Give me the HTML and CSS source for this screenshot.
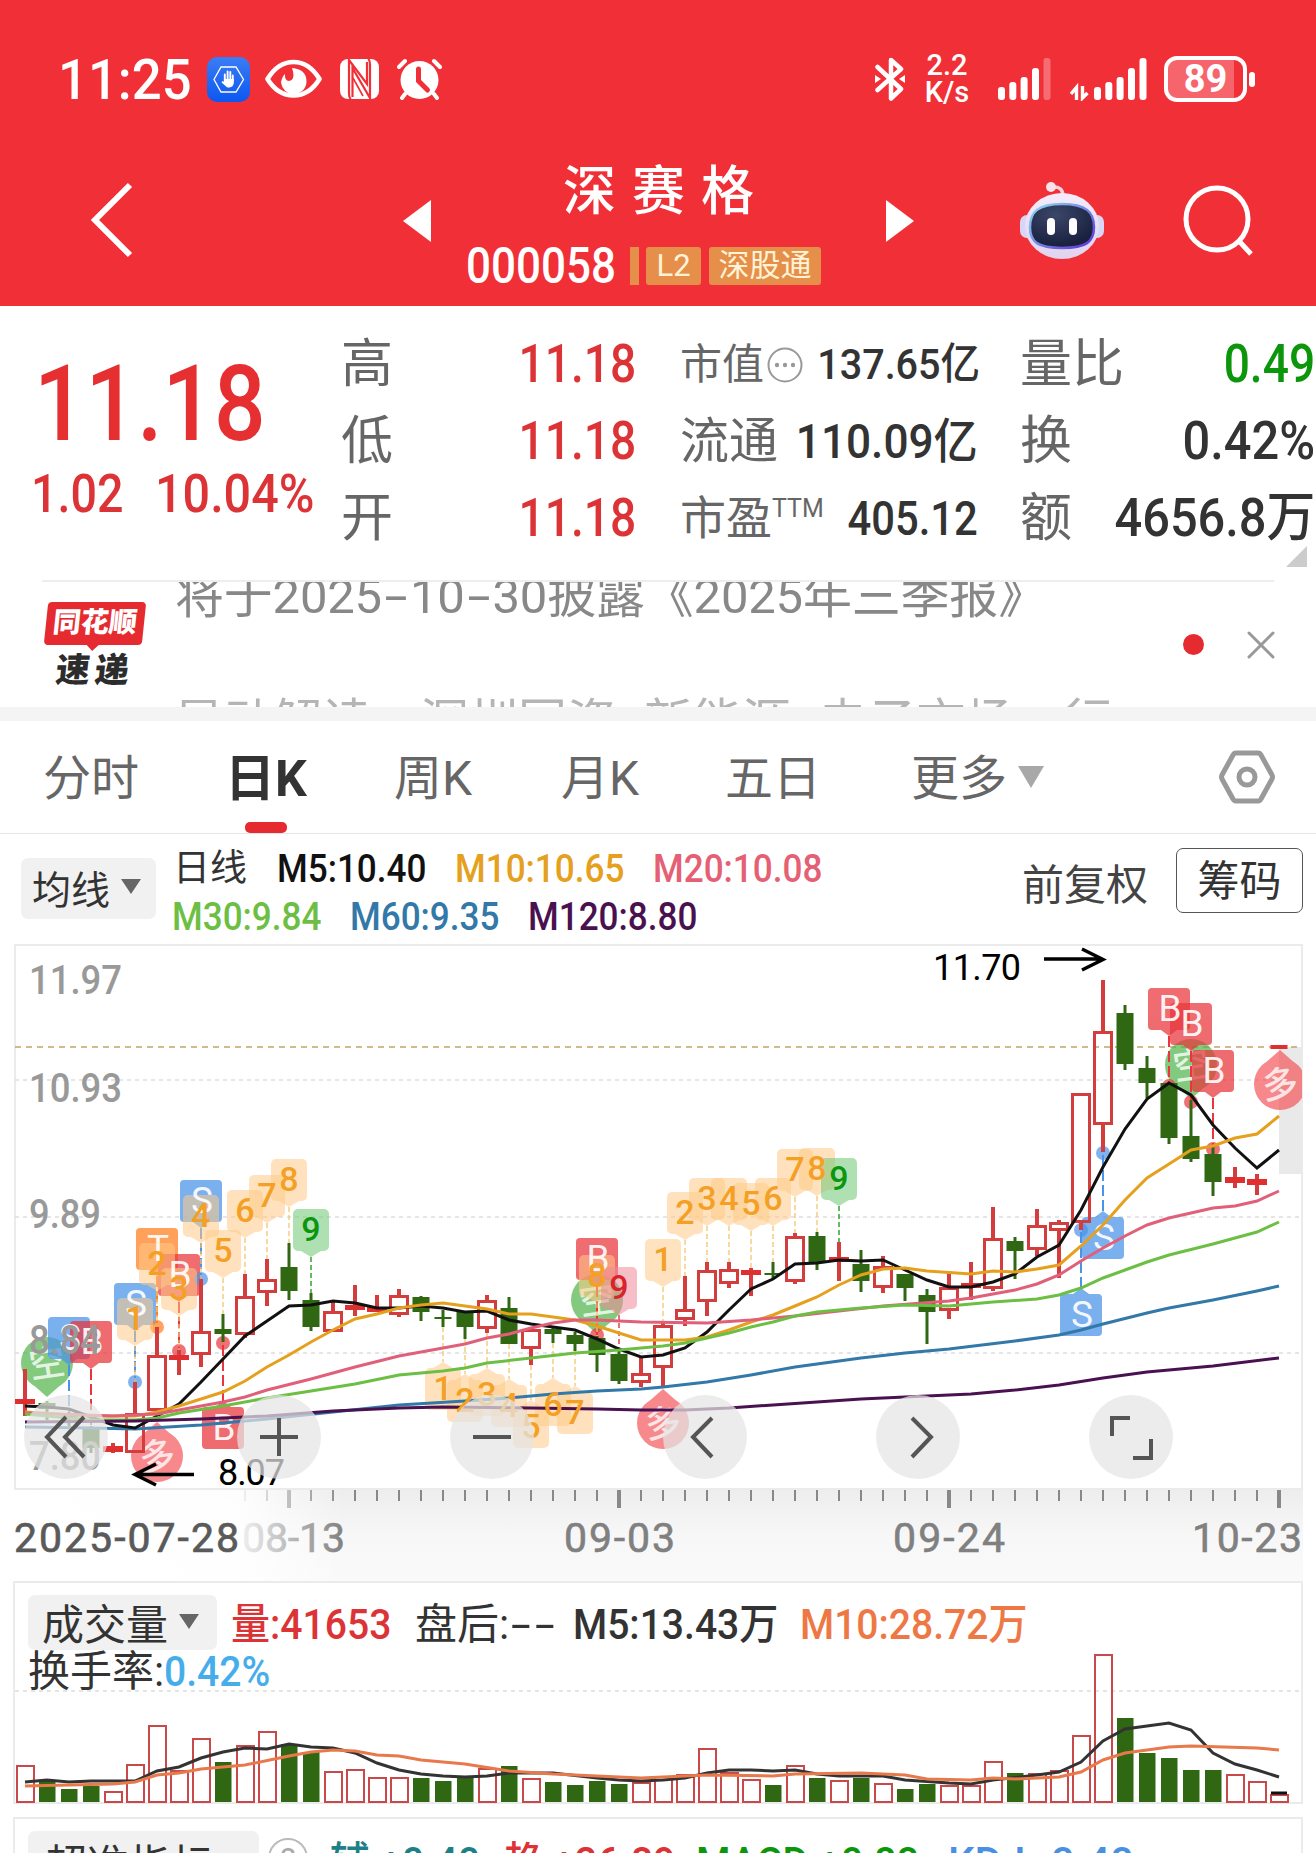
FILE: index.html
```
<!DOCTYPE html>
<html lang="zh-CN">
<head>
  <meta charset="UTF-8" />
  <meta name="viewport" content="width=device-width, initial-scale=1.0"/>
  <title>深赛格 000058</title>
  <link rel="stylesheet" href="styles.css">
</head>
<body>

  <!-- HEADER -->
  <header class="top">
    <div class="status-bar">
      <span class="time"><span class="sx">11:25</span></span>
      <svg class="ic-hand" width="43" height="45" viewBox="0 0 43 45">
        <defs><linearGradient id="blue" x1="0" y1="0" x2="0" y2="1"><stop offset="0" stop-color="#3b7df5"/><stop offset="1" stop-color="#0c57f0"/></linearGradient></defs>
        <rect width="43" height="45" rx="10" fill="url(#blue)"/>
        <path d="M14 10h15l7.500 12.500L29 35H14L7 22.500z" fill="none" stroke="#fff" stroke-width="1.300"/>
        <path d="M17.800 25v-7.500M20.600 23v-8.500M23.300 23v-8M25.800 24v-5.500" stroke="#fff" stroke-width="1.900" stroke-linecap="round"/>
        <path d="M16.800 22h10v4q-.5 4-4.500 4.500h-2l-5.800-5 1-1.500 2 1z" fill="#fff"/>
      </svg>
      <svg class="ic-eye" width="57" height="40" viewBox="0 0 57 40">
        <path d="M2.500 20C8 11 17 3 28.500 3S49 11 54.500 20C49 29 40 36.500 28.500 36.500S8 29 2.500 20z" fill="none" stroke="#fff" stroke-width="4.600" stroke-linejoin="round"/>
        <path d="M27 9q14 1 14.500 13 0 11-13 13.500-11-2-12.500-12 1-6 4-8.500-.5 7 4 7 7-1 3-13z" fill="#fff"/>
      </svg>
      <svg class="ic-nfc" width="39" height="40" viewBox="0 0 39 40">
        <rect width="39" height="40" rx="8" fill="#fff"/>
        <path d="M11 40q-2-1-2-6V1L27 25V3M28 0q2 1 2 6v33L12.500 9v29" fill="none" stroke="#f12f37" stroke-width="2.200"/>
        <path d="M13 19l10 18" stroke="#f12f37" stroke-width="1.600"/>
      </svg>
      <svg class="ic-alarm" width="45" height="43" viewBox="0 0 45 43">
        <circle cx="22.500" cy="22" r="19" fill="#fff"/>
        <path d="M2 9l6-6M43 9l-6-6M8 36l-3 4M37 36l3 4" stroke="#fff" stroke-width="4" stroke-linecap="round"/>
        <path d="M21.500 11v12l9 9" fill="none" stroke="#f12f37" stroke-width="5" stroke-linecap="round"/>
      </svg>

      <svg class="ic-bt" width="30" height="44" viewBox="0 0 30 44">
        <path d="M2.500 10L26 32 16 41.500V3L26 12 2.500 33" fill="none" stroke="#fff" stroke-width="4.500" stroke-linejoin="round" stroke-linecap="round"/>
        <path d="M0 18l6 4-6 4zM30 18l-6 4 6 4z" fill="#fff"/>
      </svg>
      <div class="net"><span>2.2</span><span>K/s</span></div>
      <svg class="ic-sig" width="54" height="43" viewBox="0 0 54 43">
        <g fill="#fff"><rect y="29" width="7" height="13" rx="3"/><rect x="11.300" y="24" width="7" height="18" rx="3"/><rect x="22.600" y="19" width="7" height="23" rx="3"/><rect x="34" y="10" width="7" height="32" rx="3"/><rect x="45.500" width="7" height="42" rx="3" opacity=".3"/></g>
      </svg>
      <svg class="ic-sig2" width="77" height="43" viewBox="0 0 77 43">
        <path d="M1 36l5.500-6.500V42M17.500 35L12.500 40V28" fill="none" stroke="#fff" stroke-width="3.400"/>
        <g fill="#fff"><rect x="24" y="29" width="7" height="13" rx="3"/><rect x="35.300" y="24" width="7" height="18" rx="3"/><rect x="46.600" y="19" width="7" height="23" rx="3"/><rect x="58" y="10" width="7" height="32" rx="3"/><rect x="69.500" width="7" height="42" rx="3"/></g>
      </svg>
      <div class="battery">89</div><i class="battery-nub"></i>
    </div>

    <nav class="nav">
      <svg width="44" height="78" viewBox="0 0 44 78"><path d="M40 3L5 38l35 35" fill="none" stroke="#fff" stroke-width="6"/></svg>
      <svg width="28" height="42" viewBox="0 0 28 42"><path d="M28 0v42L0 21z" fill="#fff"/></svg>
      <div class="stock">
        <h1>深赛格</h1>
        <div class="code"><span class="code-num"><span class="sx">000058</span></span><i></i><b>L2</b><b class="wide">深股通</b></div>
      </div>
      <svg width="28" height="42" viewBox="0 0 28 42"><path d="M0 0v42l28-21z" fill="#fff"/></svg>
      <svg class="robot" width="84" height="78" viewBox="0 0 84 78">
        <defs>
          <linearGradient id="shell" x1="0" y1="0" x2="0" y2="1"><stop offset="0" stop-color="#f5ecfa"/><stop offset=".6" stop-color="#e4ddf8"/><stop offset="1" stop-color="#e2d3ee"/></linearGradient>
          <linearGradient id="rim" x1="0" y1="0" x2="1" y2="1"><stop offset="0" stop-color="#8fdcf0"/><stop offset="1" stop-color="#5b2fd8"/></linearGradient>
          <radialGradient id="face" cx=".4" cy=".25" r=".7"><stop offset="0" stop-color="#3c4668"/><stop offset="1" stop-color="#19213f"/></radialGradient>
        </defs>
        <path d="M43 14q0-10-11-9" fill="none" stroke="#f3d3e0" stroke-width="3.500"/>
        <circle cx="31" cy="5" r="5" fill="#f9e3ea"/>
        <rect x="0" y="33" width="84" height="23" rx="7" fill="#d9d5f7"/>
        <ellipse cx="42" cy="44" rx="37" ry="33" fill="url(#shell)"/>
        <path d="M42 22C66 22 74 30 74 45S66 66 42 66 10 60 10 45 18 22 42 22z" fill="url(#face)" stroke="url(#rim)" stroke-width="2.500"/>
        <rect x="27" y="36" width="8" height="17" rx="4" fill="#fff"/><rect x="49" y="36" width="8" height="17" rx="4" fill="#fff"/>
      </svg>
      <svg class="search" width="72" height="72" viewBox="0 0 72 72"><circle cx="34" cy="34" r="31" fill="none" stroke="#fff" stroke-width="5"/><path d="M56 56l12 13" stroke="#fff" stroke-width="5"/></svg>
    </nav>
  </header>

  <!-- QUOTE -->
  <section class="quote">
    <div class="price-col">
      <div class="price"><span class="sx">11.18</span></div>
      <div class="change"><span class="sx">1.02</span><span class="sx pct">10.04%</span></div>
    </div>
    <dl class="q-col c1">
      <div><dt>高</dt><dd class="red">11.18</dd></div>
      <div><dt>低</dt><dd class="red">11.18</dd></div>
      <div><dt>开</dt><dd class="red">11.18</dd></div>
    </dl>
    <dl class="q-col c2">
      <div class="small"><dt>市值<svg width="36" height="36" viewBox="0 0 36 36"><circle cx="18" cy="18" r="16.500" fill="none" stroke="#999" stroke-width="2"/><g fill="#999"><circle cx="10" cy="18" r="2.200"/><circle cx="18" cy="18" r="2.200"/><circle cx="26" cy="18" r="2.200"/></g></svg></dt><dd class="cn">137.65亿</dd></div>
      <div><dt>流通</dt><dd class="cn">110.09亿</dd></div>
      <div class="mid"><dt>市盈<sup>TTM</sup></dt><dd>405.12</dd></div>
    </dl>
    <dl class="q-col c3">
      <div><dt>量比</dt><dd class="green">0.49</dd></div>
      <div><dt>换</dt><dd class="cn">0.42%</dd></div>
      <div><dt>额</dt><dd class="cn">4656.8万</dd></div>
    </dl>
    <i class="corner"></i>
  </section>

  <!-- NEWS TICKER -->
  <section class="news">
    <div class="news-logo"><span class="lg-top"><em>同花顺</em></span><span class="lg-bot">速递</span></div>
    <div class="ticker">
      <p>将于2025<s>-</s>10<s>-</s>30披露《2025年三季报》</p>
      <p class="next">异动解读：深圳国资+新能源+电子市场一行</p>
    </div>
    <i class="dot"></i>
    <svg width="28" height="28" viewBox="0 0 28 28"><path d="M2 2l24 24M26 2L2 26" stroke="#999" stroke-width="3" stroke-linecap="round"/></svg>
  </section>

  <!-- PERIOD TABS -->
  <div class="tabs">
    <a>分时</a>
    <a class="active">日K</a>
    <a>周K</a>
    <a>月K</a>
    <a>五日</a>
    <a>更多<svg width="26" height="22" viewBox="0 0 26 22"><path d="M0 0h26L13 22z" fill="#a8a8a8"/></svg></a>
    <svg class="gear" width="58" height="56" viewBox="0 0 58 56"><path d="M18 4h22q2 0 3 2l11 20q1 2 0 4L43 50q-1 2-3 2H18q-2 0-3-2L4 30q-1-2 0-4L15 6q1-2 3-2z" fill="none" stroke="#999" stroke-width="5"/><circle cx="29" cy="28" r="8" fill="none" stroke="#999" stroke-width="5"/></svg>
  </div>

  <!-- MA LEGEND -->
  <div class="legend">
    <button class="drop">均线<i></i></button>
    <div class="ma">
      <div class="ma-1"><span class="ma-t">日线</span><span class="sx m5">M5:10.40</span><span class="sx m10">M10:10.65</span><span class="sx m20">M20:10.08</span></div>
      <div class="ma-2"><span class="sx m30">M30:9.84</span><span class="sx m60">M60:9.35</span><span class="sx m120">M120:8.80</span></div>
    </div>
    <span class="fq">前复权</span>
    <button class="chips">筹码</button>
  </div>

  <!-- K LINE -->
  <div class="kline">
    <svg id="kchart" width="1316" height="637" viewBox="0 944 1316 637"></svg>
    <div class="tools">
      <button><svg viewBox="0 0 84 84"><path d="M42 22L23 42l19 20M60 22L41 42l19 20"/></svg></button>
      <button><svg viewBox="0 0 84 84"><path d="M42 23v38M23 42h38"/></svg></button>
      <button><svg viewBox="0 0 84 84"><path d="M23 42h38"/></svg></button>
      <button><svg viewBox="0 0 84 84"><path d="M49 23L30 42l19 20"/></svg></button>
      <button><svg viewBox="0 0 84 84"><path d="M36 23l19 19-19 20"/></svg></button>
      <button><svg viewBox="0 0 84 84"><path d="M23 41V23h18M44 63h18V44"/></svg></button>
    </div>
  </div>

  <!-- VOLUME -->
  <section class="volume">
    <div class="v-row">
      <button class="drop">成交量<i></i></button>
      <span class="v1"><span class="sx">量:41653</span></span><span class="v2">盘后:<s>-</s><s>-</s></span><span class="v3"><span class="sx">M5:13.43万</span></span><span class="v4 sx">M10:28.72万</span>
    </div>
    <div class="v-row2">换手率:<span class="sx">0.42%</span></div>
    <svg id="vchart" width="1316" height="164" viewBox="0 1640 1316 164"></svg>
  </section>

  <!-- INDICATOR -->
  <section class="indicator">
    <button class="drop">超准指标<i></i></button>
    <span class="help">?</span>
    <span class="i1"><span class="sx">辅:+0.40</span></span><span class="i2"><span class="sx">趋:+26.89</span></span><span class="i3"><span class="sx">MACD:+0.88</span></span><span class="i4">KDJ:-0.40</span>
  </section>

  <script src="chart.js"></script>
</body>
</html>
```
FILE: styles.css
```
* {
  box-sizing: border-box;
  margin: 0;
  padding: 0;
}

body {
  width: 1316px;
  height: 1853px;
  overflow: hidden;
  background: #fff;
  color: #333;
  font-family: Roboto, "Noto Sans CJK SC", sans-serif;
}

svg {
  display: block;
  flex: none;
}

i, em {
  font-style: normal;
}

button {
  border: none;
  font-family: inherit;
  color: #333;
}

/* narrow digits */
.sx {
  display: inline-block;
  transform: scaleX(0.88);
  transform-origin: left center;
}

/* wide hyphen */
s {
  display: inline-block;
  width: 0.57em;
  text-align: center;
  text-decoration: none;
  transform: scaleX(1.7);
}

/* ===== HEADER ===== */
.top {
  height: 306px;
  background: #f12f37;
  color: #fff;
}

.status-bar {
  height: 158px;
  display: flex;
  align-items: center;
  padding-left: 58px;
}

.time {
  width: 149px;
  font-size: 56px;
  font-weight: 500;
  line-height: 68px;
  padding-top: 2px;
  white-space: nowrap;
}

.time .sx { transform: scaleX(0.94); }

.ic-eye { margin-left: 15px; }
.ic-nfc { margin-left: 18px; }
.ic-alarm { margin-left: 18px; }
.ic-bt { margin-left: 433px; }

.net {
  width: 46px;
  margin-left: 19px;
  display: flex;
  flex-direction: column;
  align-items: center;
  font-size: 29px;
  font-weight: 500;
  line-height: 27px;
}

.ic-sig { margin-left: 28px; }
.ic-sig2 { margin-left: 18px; }

.battery {
  width: 83px;
  height: 46px;
  margin-left: 17px;
  border: 4px solid #fff;
  border-radius: 13px;
  background: linear-gradient(to right, #f7656c 88%, transparent 88%);
  font-size: 38px;
  font-weight: 700;
  line-height: 39px;
  text-align: center;
}

.battery-nub {
  width: 6px;
  height: 15px;
  margin-left: 2px;
  border-radius: 3px;
  background: #fff;
}

.nav {
  display: grid;
  grid-template-columns: 313px 28px 455px 134px 163px 80px;
  grid-template-rows: 126px;
  align-items: center;
  padding-left: 90px;
}

.stock {
  padding-top: 14px;
}

.stock h1 {
  padding: 1px 0 0 132px;
  font-size: 53px;
  font-weight: 500;
  line-height: 75px;
  letter-spacing: 16px;
  white-space: nowrap;
}

.code {
  height: 73px;
  display: flex;
  align-items: center;
  padding-left: 35px;
}

.code-num {
  width: 164px;
  font-size: 50px;
  font-weight: 500;
}

.code i {
  width: 9px;
  height: 38px;
  margin-right: 7px;
  background: #e58f4a;
}

.code b {
  width: 55px;
  height: 38px;
  margin-right: 8px;
  border-radius: 3px;
  background: #e58f4a;
  color: #fff3d6;
  font-size: 31px;
  font-weight: 400;
  line-height: 37px;
  text-align: center;
  white-space: nowrap;
}

.code .wide {
  width: 112px;
}

/* ===== QUOTE ===== */
.quote {
  position: relative;
  height: 276px;
  display: flex;
  padding-top: 20px;
}

.quote::after {
  content: "";
  position: absolute;
  left: 42px;
  right: 42px;
  bottom: 0;
  border-bottom: 2px solid #eee;
}

.price-col {
  width: 341px;
  color: #e52f31;
  font-weight: 500;
}

.price {
  padding: 27px 0 0 34px;
  font-size: 105px;
  line-height: 104px;
}

.price .sx { transform: scaleX(0.865); }

.change {
  display: grid;
  grid-template-columns: 124px auto;
  padding-left: 31px;
  font-size: 53px;
  line-height: 74px;
  color: #dc3336;
}

.change .pct { transform: scaleX(0.915); }

.q-col > div {
  height: 77px;
  display: flex;
  align-items: center;
  justify-content: space-between;
  white-space: nowrap;
  font-size: 52px;
  line-height: 77px;
}

.c1 { width: 295px; }
.c2 { width: 298px; margin-left: 44px; }
.c3 { width: 295px; margin-left: 42px; }

.q-col dt {
  display: flex;
  align-items: center;
  color: #666;
}

.q-col dd {
  font-size: 53px;
  font-weight: 500;
  transform: scaleX(0.87);
  transform-origin: right center;
}

.q-col .cn {
  transform: scaleX(0.92);
}

.c2 dt { font-size: 49px; }
.c2 dd { font-size: 48px; }
.c2 .small dt { font-size: 42px; gap: 3px; }
.c2 .small dd { font-size: 43px; }
.c2 .mid dt { font-size: 46px; }

.c2 sup {
  font-size: 25px;
  line-height: 30px;
  margin-top: -20px;
}

.red { color: #dc3336; }
.green { color: #0c960c; }

.corner {
  position: absolute;
  right: 9px;
  bottom: 15px;
  border-left: 21px solid transparent;
  border-bottom: 21px solid #ccc;
}

/* ===== NEWS ===== */
.news {
  height: 139px;
  border-bottom: 14px solid #f4f4f4;
  display: flex;
  align-items: center;
  padding-left: 43px;
  overflow: hidden;
}

.news-logo {
  width: 132px;
  display: flex;
  flex-direction: column;
  font-weight: 900;
}

.lg-top {
  position: relative;
  width: 98px;
  height: 43px;
  margin: 2px 0 0 3px;
  border-radius: 4px;
  background: #e52b30;
  color: #fff;
  font-size: 28px;
  line-height: 41px;
  text-align: center;
  transform: skewX(-6deg);
}

.lg-top::after {
  content: "";
  position: absolute;
  left: 43px;
  top: 43px;
  border: 6px solid transparent;
  border-top-color: #e52b30;
}

.lg-bot {
  padding-left: 13px;
  margin-top: 5px;
  color: #2c2c2c;
  font-size: 34px;
  line-height: 40px;
  letter-spacing: 5px;
  transform: skewX(-6deg);
}

.ticker {
  width: 1008px;
  align-self: flex-start;
  height: 125px;
  overflow: hidden;
}

.ticker p {
  font-size: 49px;
  line-height: 126px;
  color: #888;
  white-space: nowrap;
}

.ticker p:first-child { margin-top: -48px; letter-spacing: -0.2px; }
.ticker .next { color: #b5b5b5; }

.dot {
  width: 21px;
  height: 21px;
  margin-right: 43px;
  border-radius: 50%;
  background: #e52b30;
}

/* ===== TABS ===== */
.tabs {
  height: 113px;
  display: flex;
  align-items: center;
  padding-left: 43px;
  border-bottom: 1px solid #e6e6e6;
}

.tabs a {
  position: relative;
  width: 186px;
  display: flex;
  align-items: center;
  gap: 11px;
  padding-top: 4px;
  font-size: 48px;
  line-height: 108px;
  color: #666;
  white-space: nowrap;
}

.tabs a:nth-child(2) { width: 165px; }
.tabs a:nth-child(3) { width: 167px; }
.tabs a:nth-child(4) { width: 164px; }
.tabs a:nth-child(6) { width: 307px; }

.tabs a svg { margin-top: -4px; }

.tabs .active {
  color: #333;
  font-size: 50px;
  font-weight: 700;
  text-indent: -4px;
}

.tabs .active::after {
  content: "";
  position: absolute;
  left: 16px;
  bottom: 0;
  width: 42px;
  height: 11px;
  border-radius: 5px;
  background: #e52b30;
}

/* ===== LEGEND ===== */
.legend {
  height: 110px;
  display: flex;
  align-items: flex-start;
  padding-left: 21px;
}

.drop {
  flex: none;
  height: 61px;
  display: flex;
  align-items: center;
  border-radius: 7px;
  background: #f1f1f1;
  white-space: nowrap;
}

.drop i {
  border: 10px solid transparent;
  border-top: 15px solid #666;
  border-bottom: 0;
}

.legend .drop {
  width: 135px;
  margin-top: 24px;
  padding: 0 0 4px 11px;
  gap: 11px;
  font-size: 39px;
}

.ma {
  flex: none;
  width: 866px;
  padding: 11px 0 0 17px;
  font-size: 39px;
  font-weight: 500;
  line-height: 48px;
  white-space: nowrap;
}

.ma div {
  display: grid;
}

.ma .ma-1 { grid-template-columns: 104px 178px 198px 200px; }
.ma .ma-2 { grid-template-columns: 178px 178px 200px; margin-left: -1px; }

.ma .sx { transform: scaleX(0.9); }

.m5 { color: #111; }
.m10 { color: #e5a01e; }
.m20 { color: #e55f75; }
.m30 { color: #6cbf44; }
.m60 { color: #3278a8; }
.m120 { color: #4a1150; }

.ma .ma-t {
  font-size: 37px;
  font-weight: 400;
}

.fq {
  flex: none;
  width: 154px;
  font-size: 42px;
  line-height: 104px;
  color: #444;
}

.chips {
  flex: none;
  width: 127px;
  height: 65px;
  margin-top: 14px;
  padding-top: 3px;
  border: 1px solid #555;
  border-radius: 7px;
  background: #fff;
  font-size: 42px;
  line-height: 60px;
}

/* ===== K LINE ===== */
.kline {
  position: relative;
  height: 637px;
}

.tools {
  position: absolute;
  top: 451px;
  left: 24px;
  display: flex;
  gap: 129px;
}

.tools button {
  width: 84px;
  height: 84px;
  border-radius: 50%;
  background: rgba(229, 229, 229, 0.72);
}

.tools path {
  fill: none;
  stroke: #555;
  stroke-width: 4;
}

svg text {
  font-family: Roboto, "Noto Sans CJK SC", sans-serif;
}

/* ===== VOLUME ===== */
.volume {
  height: 223px;
  margin: 0 13px 0 13px;
  border: 2px solid #ebebeb;
  position: relative;
}

.v-row {
  height: 67px;
  display: flex;
  align-items: flex-start;
  padding: 12px 0 0 13px;
  font-size: 42px;
  font-weight: 500;
  line-height: 59px;
  white-space: nowrap;
}

.v-row .drop {
  width: 189px;
  height: 55px;
  padding: 0 0 2px 14px;
  gap: 11px;
  font-size: 42px;
}

.v-row .sx { transform: scaleX(0.93); }
.v-row .v1 { width: 184px; margin-left: 14px; color: #dc3336; }
.v-row .v2 { width: 158px; font-weight: 400; }
.v-row .v3 { width: 227px; }
.v-row .v4 { color: #ee7845; }

.v-row2 {
  padding-left: 13px;
  font-size: 42px;
  font-weight: 400;
  line-height: 43px;
}

.v-row2 span {
  color: #45aeea;
  font-weight: 500;
}

.v-row2 .sx { transform: scaleX(0.93); }

#vchart {
  position: absolute;
  left: -15px;
  bottom: -1px;
}

/* ===== INDICATOR ===== */
.indicator {
  height: 80px;
  margin: 13px 13px 0;
  border: 2px solid #ebebeb;
  display: flex;
  align-items: flex-start;
  padding: 12px 0 0 13px;
  font-size: 42px;
  font-weight: 500;
  line-height: 64px;
  white-space: nowrap;
}

.indicator .drop {
  width: 231px;
  padding-left: 17px;
  gap: 14px;
  font-size: 42px;
}

.help {
  width: 40px;
  height: 40px;
  margin: 7px 22px 0 9px;
  border: 2px solid #bbb;
  border-radius: 50%;
  color: #aaa;
  font-size: 32px;
  font-weight: 400;
  line-height: 38px;
  text-align: center;
}

.indicator > span { flex: none; }
.indicator .sx { transform: scaleX(0.94); }
.i1 { width: 173px; color: #1c8086; }
.i2 { width: 193px; color: #dc3336; }
.i3 { width: 252px; color: #0c960c; }
.i4 { color: #4a90e2; }
```
FILE: chart.js
```
const RED = '#d43d3d', GREEN = '#2f6713';
const X = i => 25 + 22 * i;

// [type, high, bodyTop, bodyBottom, low]  r = hollow red, f = solid red, g = green
const candles = [
  ['f',1369,1399,1404,1416], ['g',1401,1403,1409,1420], ['g',1412,1413,1418,1426], ['g',1426,1428,1448,1453],
  ['f',1443,1446,1452,1453], ['r',1382,1413,1453,1453], ['r',1327,1355,1411,1411], ['f',1350,1355,1360,1375],
  ['r',1279,1331,1355,1367], ['g',1314,1329,1334,1342], ['r',1274,1296,1335,1338], ['r',1259,1279,1293,1306],
  ['g',1243,1267,1291,1300], ['g',1293,1300,1327,1331], ['r',1302,1311,1332,1332], ['f',1285,1305,1310,1316],
  ['f',1295,1307,1312,1312], ['r',1289,1295,1315,1317], ['g',1296,1297,1312,1321], ['g',1310,1317,1319,1327],
  ['g',1312,1312,1327,1339], ['r',1295,1300,1329,1333], ['g',1297,1308,1344,1344], ['r',1329,1329,1349,1365],
  ['g',1327,1329,1334,1343], ['g',1332,1335,1344,1351], ['g',1336,1338,1355,1372], ['g',1350,1354,1381,1384],
  ['r',1357,1373,1383,1387], ['r',1323,1325,1368,1386], ['r',1276,1309,1320,1326], ['r',1262,1270,1302,1316],
  ['r',1262,1269,1284,1288], ['f',1268,1270,1275,1296], ['g',1262,1273,1275,1278], ['r',1233,1236,1282,1284],
  ['g',1232,1236,1262,1270], ['f',1242,1257,1262,1281], ['g',1250,1264,1281,1292], ['r',1256,1266,1288,1293],
  ['g',1274,1274,1288,1301], ['g',1289,1295,1312,1344], ['r',1272,1287,1311,1319], ['f',1262,1283,1288,1300],
  ['r',1207,1238,1289,1291], ['g',1237,1241,1251,1279], ['r',1209,1225,1250,1256], ['r',1220,1222,1231,1278],
  ['r',1093,1093,1223,1230], ['r',980,1031,1125,1152], ['g',1005,1013,1064,1070], ['g',1056,1068,1083,1098],
  ['g',1082,1083,1138,1144], ['g',1100,1136,1159,1162], ['g',1147,1154,1182,1196], ['f',1167,1177,1183,1188],
  ['f',1174,1179,1185,1195], ['f',1045,1045,1049,1049]
];

const lines = {
  '#3278a8': '25,1427 91,1428 135,1429 201,1425 267,1419 333,1412 399,1405 465,1401 509,1398 553,1394 597,1391 641,1389 663,1387 707,1382 751,1375 795,1367 839,1361 861,1358 905,1353 949,1349 1015,1341 1059,1335 1081,1330 1103,1324 1147,1313 1169,1308 1213,1300 1257,1291 1279,1286',
  '#111': '25,1406 47,1407 69,1409 91,1417 113,1425 135,1428 157,1416 179,1404 201,1382 223,1359 245,1336 267,1321 289,1306 311,1305 333,1301 355,1303 377,1308 399,1308 421,1306 443,1308 465,1312 487,1311 509,1320 531,1324 553,1327 575,1330 597,1339 619,1349 641,1357 663,1355 685,1348 707,1332 729,1310 751,1289 773,1279 795,1264 817,1263 839,1260 861,1261 883,1260 905,1270 927,1280 949,1287 971,1287 993,1282 1015,1274 1037,1257 1059,1245 1081,1210 1103,1167 1125,1129 1147,1099 1169,1083 1191,1095 1213,1125 1235,1148 1257,1168 1279,1150',
  '#e5a01e': '25,1412 91,1416 135,1416 157,1412 179,1406 223,1392 245,1381 267,1367 289,1355 311,1342 333,1330 355,1319 377,1314 399,1308 421,1305 443,1303 465,1306 487,1309 509,1314 531,1314 553,1317 575,1320 597,1326 619,1333 641,1340 663,1340 685,1340 707,1337 729,1330 751,1322 773,1315 795,1306 817,1297 839,1285 861,1275 883,1269 905,1268 927,1271 971,1274 993,1271 1015,1272 1037,1269 1059,1265 1081,1246 1103,1225 1125,1200 1147,1178 1169,1164 1191,1150 1213,1146 1235,1138 1257,1134 1279,1116',
  '#e0607a': '25,1413 113,1416 157,1414 201,1406 223,1402 245,1397 267,1390 311,1379 355,1367 399,1356 443,1348 465,1344 487,1338 509,1334 531,1328 553,1323 575,1320 597,1320 641,1322 707,1323 751,1320 795,1316 839,1311 883,1306 949,1301 971,1298 993,1294 1015,1290 1037,1284 1059,1275 1081,1261 1103,1248 1125,1236 1147,1225 1169,1218 1191,1213 1213,1208 1235,1206 1257,1201 1279,1191',
  '#6cbf44': '25,1414 91,1420 135,1420 157,1418 179,1413 223,1406 267,1398 311,1391 355,1384 399,1375 443,1371 465,1368 487,1363 531,1358 575,1353 619,1350 663,1346 685,1343 707,1338 729,1333 751,1327 773,1322 795,1316 817,1312 839,1310 861,1308 905,1305 949,1306 993,1302 1037,1299 1059,1295 1081,1288 1103,1278 1125,1270 1147,1262 1169,1255 1213,1244 1257,1232 1279,1222',
  '#4a1150': '25,1422 135,1421 201,1419 267,1416 333,1411 399,1408 443,1407 531,1408 597,1409 641,1410 685,1410 729,1408 773,1405 817,1402 861,1399 927,1396 971,1394 1015,1390 1059,1385 1103,1378 1147,1372 1213,1366 1279,1358'
};

// nine-turn counters: [index, digit, top, color, dir]
const counters = [
  [5,1,1298,'o'], [6,2,1243,'o'], [7,3,1268,'o'], [8,4,1195,'o'], [9,5,1230,'o'], [10,6,1190,'o'],
  [11,7,1175,'o'], [12,8,1159,'o'], [13,9,1209,'g'],
  [26,8,1255,'o'], [27,9,1267,'r'],
  [29,1,1239,'o'], [30,2,1192,'o'], [31,3,1178,'o'], [32,4,1178,'o'], [33,5,1183,'o'], [34,6,1178,'o'],
  [35,7,1149,'o'], [36,8,1148,'o'], [37,9,1158,'g'],
  [19,1,1368,'o','u'], [20,2,1380,'o','u'], [21,3,1374,'o','u'], [22,4,1385,'o','u'],
  [23,5,1406,'o','u'], [24,6,1384,'o','u'], [25,7,1392,'o','u']
];
const counterColors = { o: ['#ffcb88', '#f3a024'], g: ['#6fc873', '#0c960c'], r: ['#f08a98', '#d8242c'] };

// trade marks: [index, letter, top, dotY, dir]
const marks = [
  [2,'S',1317,1420], [3,'B',1321,1425], [5,'S',1283,1382], [6,'T',1228,1327], [7,'B',1254,1351], [8,'S',1180,1279],
  [9,'B',1407,1343,'u'], [26,'B',1238,1335], [52,'B',988,1086], [53,'B',1003,1102], [54,'B',1050,1149],
  [49,'S',1217,1153,'u'], [48,'S',1294,1230,'u']
];
const markColors = { S: '#4b93ea', B: '#e9353b', T: '#ff7f1e' };

// bull / bear bubbles: [cx, cy, char, color, dir]
const bubbles = [
  [47,1363,'空','#4fb548','d'], [597,1300,'空','#4fb548','d'], [1191,1065,'空','#4fb548','d'],
  [157,1456,'多','#f4575c','u'], [663,1423,'多','#f4575c','u'], [1280,1084,'多','#f4575c','u']
];

function candle(c, i) {
  const [t, hi, top, bot, lo] = c;
  const x = X(i), col = t === 'g' ? GREEN : RED;
  const w = t === 'g' ? 17 : (i === 57 ? 17 : 20);
  let s = '';
  if (t === 'r') {
    s += `<path d="M${x} ${hi}V${top}M${x} ${bot}V${lo}" stroke="${col}" stroke-width="4"/>`;
    s += `<rect x="${x - 8.5}" y="${top + 1.5}" width="17" height="${bot - top - 3}" fill="none" stroke="${col}" stroke-width="3"/>`;
  } else {
    s += `<path d="M${x} ${hi}V${lo}" stroke="${col}" stroke-width="${t === 'g' ? 3 : 4}"/>`;
    s += `<rect x="${x - w / 2}" y="${top}" width="${w}" height="${bot - top}" fill="${t === 'f' ? '#e02f30' : col}"/>`;
  }
  return s;
}

function counter([i, n, top, c, dir]) {
  const x = X(i), [bg, fg] = counterColors[c];
  const tail = dir ? `M${x - 10} ${top}L${x} ${top - 6}L${x + 10} ${top}z` : `M${x - 10} ${top + 42}L${x} ${top + 48}L${x + 10} ${top + 42}z`;
  const stem = dir ? `M${x} ${candles[i][4]}V${top - 6}` : `M${x} ${top + 48}V${candles[i][1]}`;
  return `<path d="${stem}" stroke="${c === 'o' ? '#f5c56c' : fg}" stroke-width="1.6" stroke-dasharray="5 3" opacity=".8"/>
    <g fill="${bg}" opacity=".55"><rect x="${x - 18}" y="${top}" width="36" height="42" rx="5"/><path d="${tail}"/></g>`;
}

function counterText([i, n, top, c]) {
  return `<text x="${X(i)}" y="${top + 32}" font-size="34" font-weight="500" fill="${counterColors[c][1]}" text-anchor="middle">${n}</text>`;
}

function mark([i, ch, top, dot, dir]) {
  const x = X(i), col = markColors[ch];
  const tail = dir ? `M${x - 8} ${top}L${x} ${top - 6}L${x + 8} ${top}z` : `M${x - 8} ${top + 42}L${x} ${top + 48}L${x + 8} ${top + 42}z`;
  return `<path d="M${x} ${dir ? top - 6 : top + 48}V${dot}" stroke="${col}" stroke-width="2" stroke-dasharray="11 4"/>
    ${i > 3 ? `<circle cx="${x}" cy="${dot}" r="7" fill="${col}" opacity=".7"/>` : ''}
    <g fill="${col}" opacity=".73"><rect x="${x - 21}" y="${top}" width="42" height="42" rx="4"/><path d="${tail}"/></g>`;
}

function markText([i, ch, top]) {
  return `<text x="${X(i) + 1}" y="${top + 33}" font-size="37" fill="#fff" fill-opacity=".92" text-anchor="middle">${ch}</text>`;
}

function bubble([x, y, ch, col, dir]) {
  const tip = dir === 'd' ? `M${x - 17} ${y + 19}L${x} ${y + 34}L${x + 17} ${y + 19}z` : `M${x - 17} ${y - 19}L${x} ${y - 34}L${x + 17} ${y - 19}z`;
  return `<g fill="${col}" opacity=".7"><circle cx="${x}" cy="${y}" r="26"/><path d="${tip}"/></g>
    <text x="${x}" y="${y + 13}" font-size="36" font-weight="500" fill="#fff" fill-opacity=".8" text-anchor="middle" transform="rotate(-8 ${x} ${y})">${ch}</text>`;
}

let k = `<defs>
  <linearGradient id="axis" x1="0" y1="0" x2="0" y2="1"><stop offset="0" stop-color="#ededed"/><stop offset=".5" stop-color="#f7f7f7"/><stop offset="1" stop-color="#fafafa"/></linearGradient>
  <linearGradient id="fade" x1="0" y1="0" x2="1" y2="0"><stop offset="0" stop-color="#fff"/><stop offset=".68" stop-color="#fff" stop-opacity=".9"/><stop offset="1" stop-color="#fff" stop-opacity="0"/></linearGradient>
  <clipPath id="clip"><rect x="14" y="944" width="1288" height="546"/></clipPath></defs>`;
k += '<rect x="15" y="1489" width="1288" height="92" fill="url(#axis)"/>';

// axis ticks
for (let x = 245; x <= 1279; x += 22) {
  const major = (x - 289) % 330 === 0;
  k += `<path d="M${x} 1490v${major ? 18 : 11}" stroke="#888" stroke-width="${major ? 4 : 2}"/>`;
}
const date = (x, t, w) => `<text x="${x}" y="1552" font-size="41" fill="#808080" stroke="#808080" stroke-width=".6" textLength="${w}">${t}</text>`;
k += date(242, '08-13', 103) + date(564, '09-03', 111) + date(893, '09-24', 112) + date(1192, '10-23', 110);
k += '<rect x="14" y="1489" width="330" height="92" fill="url(#fade)"/>';
k += '<text x="14" y="1552" font-size="41" fill="#5a5a5a" stroke="#5a5a5a" stroke-width=".7" textLength="225">2025-07-28</text>';

// frame and grid
k += '<rect x="15" y="945" width="1287" height="544" fill="#fff" stroke="#ebebeb" stroke-width="2"/>';
[1080, 1217, 1353].forEach(y => {
  k += `<path d="M15 ${y}H1302" stroke="#ddd" stroke-width="1.5" stroke-dasharray="4 4"/>`;
});
k += '<g clip-path="url(#clip)"><rect x="1279" y="1047" width="23" height="127" fill="#e9e9e9"/>';
k += '<path d="M15 1047H1302" stroke="#c4a468" stroke-width="1.6" stroke-dasharray="6 5"/>';

k += bubbles.map(bubble).join('') + marks.map(mark).join('') + candles.map(candle).join('');
k += counters.map(counter).join('') + marks.map(markText).join('');
for (const c in lines) k += `<polyline points="${lines[c]}" fill="none" stroke="${c}" stroke-width="3"/>`;
k += counters.map(counterText).join('') + '</g>';

[[994, '11.97', 93], [1102, '10.93', 93], [1228, '9.89', 72], [1354, '8.84', 72], [1470, '7.80', 72]].forEach(([y, t, w]) => {
  k += `<text x="29" y="${y}" font-size="40" font-weight="500" fill="#999" textLength="${w}" lengthAdjust="spacingAndGlyphs">${t}</text>`;
});
k += `<g fill="none" stroke="#000" stroke-width="3.5"><path d="M1044 959H1102M1082 949L1103 959.500L1082 970M194 1474.500H136M156 1464L135 1474.500L156 1485"/></g>
  <text x="933" y="980" font-size="36" textLength="88">11.70</text><text x="218" y="1485" font-size="36" textLength="67">8.07</text>`;
document.getElementById('kchart').innerHTML = k;

// volume bar tops
const vol = [1766,1781,1790,1787,1792,1765,1726,1771,1739,1763,1746,1732,1745,1753,1772,1770,1778,1778,1779,1782,
  1779,1769,1767,1779,1783,1786,1782,1785,1783,1777,1775,1749,1773,1780,1786,1766,1779,1781,1779,1784,
  1790,1785,1786,1786,1762,1774,1774,1771,1736,1655,1719,1754,1759,1771,1771,1775,1782,1795];

let v = '<path d="M15 1692H1302" stroke="#ddd" stroke-width="1.500" stroke-dasharray="4 4"/>';
vol.forEach((y, i) => {
  const x = X(i);
  if (candles[i][0] === 'g') v += `<rect x="${x - 8}" y="${y}" width="16.500" height="${1803 - y}" fill="${GREEN}"/>`;
  else v += `<rect x="${x - 8}" y="${y + 1}" width="17" height="${1802 - y}" fill="none" stroke="#c9484a" stroke-width="2"/>`;
});
v += '<path d="M1271 1794H1287" stroke="#111" stroke-width="3"/>';
v += '<polyline fill="none" stroke="#333" stroke-width="3" points="25,1783 47,1781 69,1783 91,1782 135,1782 157,1772 179,1768 201,1759 223,1753 245,1749 267,1750 289,1745 311,1748 333,1749 355,1754 377,1764 399,1771 421,1775 443,1777 465,1778 487,1777 509,1774 553,1774 597,1779 619,1781 641,1782 663,1781 685,1779 707,1774 729,1771 751,1771 773,1772 795,1771 817,1775 839,1777 883,1777 905,1781 949,1784 971,1785 993,1781 1037,1776 1059,1773 1081,1763 1103,1742 1125,1730 1147,1727 1169,1724 1191,1731 1213,1754 1235,1765 1257,1771 1279,1778"/>';
v += '<polyline fill="none" stroke="#e8794a" stroke-width="3" points="25,1787 113,1785 135,1783 157,1776 179,1774 201,1770 245,1766 289,1757 311,1753 333,1751 355,1752 377,1756 399,1757 421,1761 465,1765 509,1772 553,1775 641,1779 707,1776 773,1777 795,1775 861,1774 905,1776 927,1780 971,1781 993,1779 1015,1780 1059,1778 1081,1773 1103,1761 1125,1754 1147,1751 1169,1748 1191,1747 1257,1749 1279,1751"/>';
document.getElementById('vchart').innerHTML = v;
```
